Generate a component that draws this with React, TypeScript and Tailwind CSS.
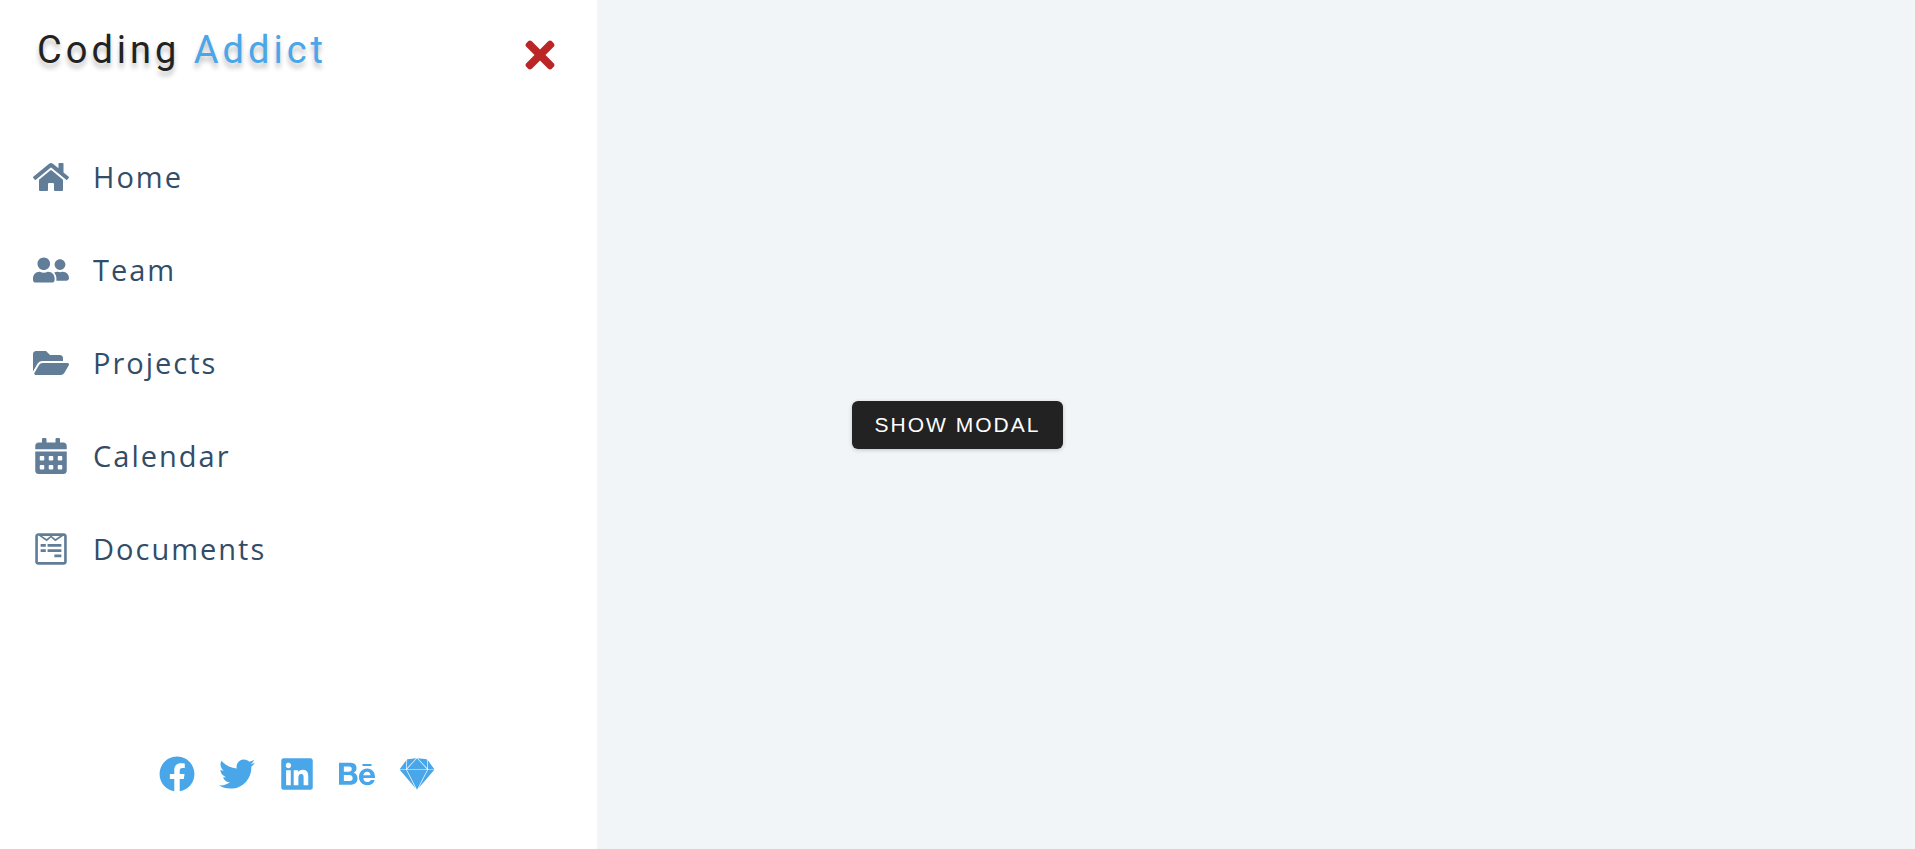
import React from 'react';
import {
  FaHome,
  FaUserFriends,
  FaFolderOpen,
  FaCalendarAlt,
  FaWpforms,
  FaFacebook,
  FaTwitter,
  FaLinkedin,
  FaBehance,
  FaSketch,
  FaTimes,
} from 'react-icons/fa';

const links = [
  { text: 'Home', Icon: FaHome },
  { text: 'Team', Icon: FaUserFriends },
  { text: 'Projects', Icon: FaFolderOpen },
  { text: 'Calendar', Icon: FaCalendarAlt },
  { text: 'Documents', Icon: FaWpforms },
];

const social = [
  { name: 'Facebook', Icon: FaFacebook },
  { name: 'Twitter', Icon: FaTwitter },
  { name: 'LinkedIn', Icon: FaLinkedin },
  { name: 'Behance', Icon: FaBehance },
  { name: 'Sketch', Icon: FaSketch },
];

function Sidebar() {
  return (
    <aside className="flex w-[597px] max-w-full shrink-0 flex-col bg-white">
      <header className="flex items-end justify-between pt-6 pr-9 pl-[37px]">
        <p className="font-['Roboto',sans-serif] text-[38px] leading-[52px] tracking-[4px] text-[#222] [text-shadow:0_5px_5px_rgba(0,0,0,0.25)]">
          Coding <span className="text-[#49a6e9]">Addict</span>
        </p>
        <button type="button" aria-label="Close sidebar" className="text-[42px] text-[#bb2525]">
          <FaTimes />
        </button>
      </header>
      <nav className="mt-[54px]">
        <ul>
          {links.map(({ text, Icon }) => (
            <li key={text}>
              <a
                href="#"
                className="flex h-[93px] items-center gap-6 px-[33px] font-['Open_Sans',sans-serif] text-[29px] tracking-[2px] text-[#324d67]"
              >
                <Icon className="text-[36px] text-[#617d98]" />
                {text}
              </a>
            </li>
          ))}
        </ul>
      </nav>
      <ul className="mt-auto flex justify-center gap-6 pr-1 pb-[57px]">
        {social.map(({ name, Icon }) => (
          <li key={name}>
            <a href="#" aria-label={name} className="block text-[36px] text-[#49a6e9]">
              <Icon />
            </a>
          </li>
        ))}
      </ul>
    </aside>
  );
}

export default function App() {
  return (
    <div className="grid min-h-screen bg-[#f1f5f8]">
      <div className="z-10 col-start-1 row-start-1 flex justify-self-start">
        <Sidebar />
      </div>
      <main className="col-start-1 row-start-1 flex items-center justify-center">
        <button
          type="button"
          className="z-20 h-12 rounded-md bg-[#222] px-[23px] font-['Liberation_Sans',Arial,sans-serif] text-[21px] tracking-[2px] text-white uppercase shadow-[0_1px_4px_rgba(0,0,0,0.2)]"
        >
          Show Modal
        </button>
      </main>
    </div>
  );
}
